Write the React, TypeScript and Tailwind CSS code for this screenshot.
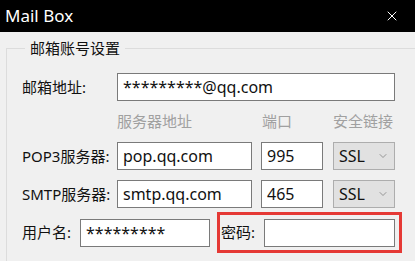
import { ChevronDown, X } from 'lucide-react';

const font = { fontFamily: '"Segoe UI", "Noto Sans", "Noto Sans CJK SC", sans-serif' };

function Field({ value, className }: { value: string; className: string }) {
  return (
    <div
      className={`h-[28px] bg-white border border-[#7a7a7a] flex items-center pl-[5px] text-[16px] text-[#111] leading-none ${className}`}
    >
      {value}
    </div>
  );
}

function SslSelect() {
  return (
    <div className="w-[62px] h-[28px] bg-[#e1e1e1] border border-[#adadad] flex items-center justify-between pl-[5px] pr-[5px] text-[16px] text-[#111]">
      <span>SSL</span>
      <ChevronDown className="w-[12px] h-[12px] text-[#666]" strokeWidth={1.25} />
    </div>
  );
}

export default function App() {
  return (
    <div className="w-[415px] h-[261px] bg-[#f0f0f0] overflow-hidden" style={font}>
      <div className="h-[32px] bg-black flex items-center justify-between pl-[5px] pr-[15px] text-white">
        <span className="text-[17px]">Mail Box</span>
        <X className="w-[16px] h-[16px]" strokeWidth={1.5} />
      </div>

      <div className="pl-[6px] pr-[5px] pt-[6px]">
        <fieldset className="border border-[#dcdcdc] pl-[15px] pr-[13px] h-[240px]">
          <legend className="ml-[3px] px-[5px] text-[15px] text-[#111] leading-[20px]">邮箱账号设置</legend>

          <div className="flex items-center mt-[15px]">
            <span className="w-[95px] text-[15px] text-[#111]">邮箱地址:</span>
            <Field value="*********@qq.com" className="w-[278px]" />
          </div>

          <div className="flex items-center mt-[10px] h-[20px] text-[15px] text-[#a0a0a0]">
            <span className="ml-[95px] w-[145px]">服务器地址</span>
            <span className="w-[71px]">端口</span>
            <span>安全链接</span>
          </div>

          <div className="flex items-center mt-[11px]">
            <span className="w-[95px] text-[15px] text-[#111]">POP3服务器:</span>
            <Field value="pop.qq.com" className="w-[135px]" />
            <Field value="995" className="w-[62px] ml-[9px]" />
            <div className="ml-[10px]">
              <SslSelect />
            </div>
          </div>

          <div className="flex items-center mt-[10px]">
            <span className="w-[95px] text-[15px] text-[#111]">SMTP服务器:</span>
            <Field value="smtp.qq.com" className="w-[135px]" />
            <Field value="465" className="w-[62px] ml-[9px]" />
            <div className="ml-[10px]">
              <SslSelect />
            </div>
          </div>

          <div className="flex items-center mt-[4px]">
            <span className="w-[58px] text-[15px] text-[#111]">用户名:</span>
            <Field value="*********" className="w-[130px]" />
            <div className="ml-[7px] w-[185px] h-[41px] border-[3px] border-[#e53935] flex items-center pl-[1px] pr-[4px]">
              <span className="w-[43px] text-[15px] text-[#111]">密码:</span>
              <Field value="" className="w-[131px]" />
            </div>
          </div>
        </fieldset>
      </div>
    </div>
  );
}
